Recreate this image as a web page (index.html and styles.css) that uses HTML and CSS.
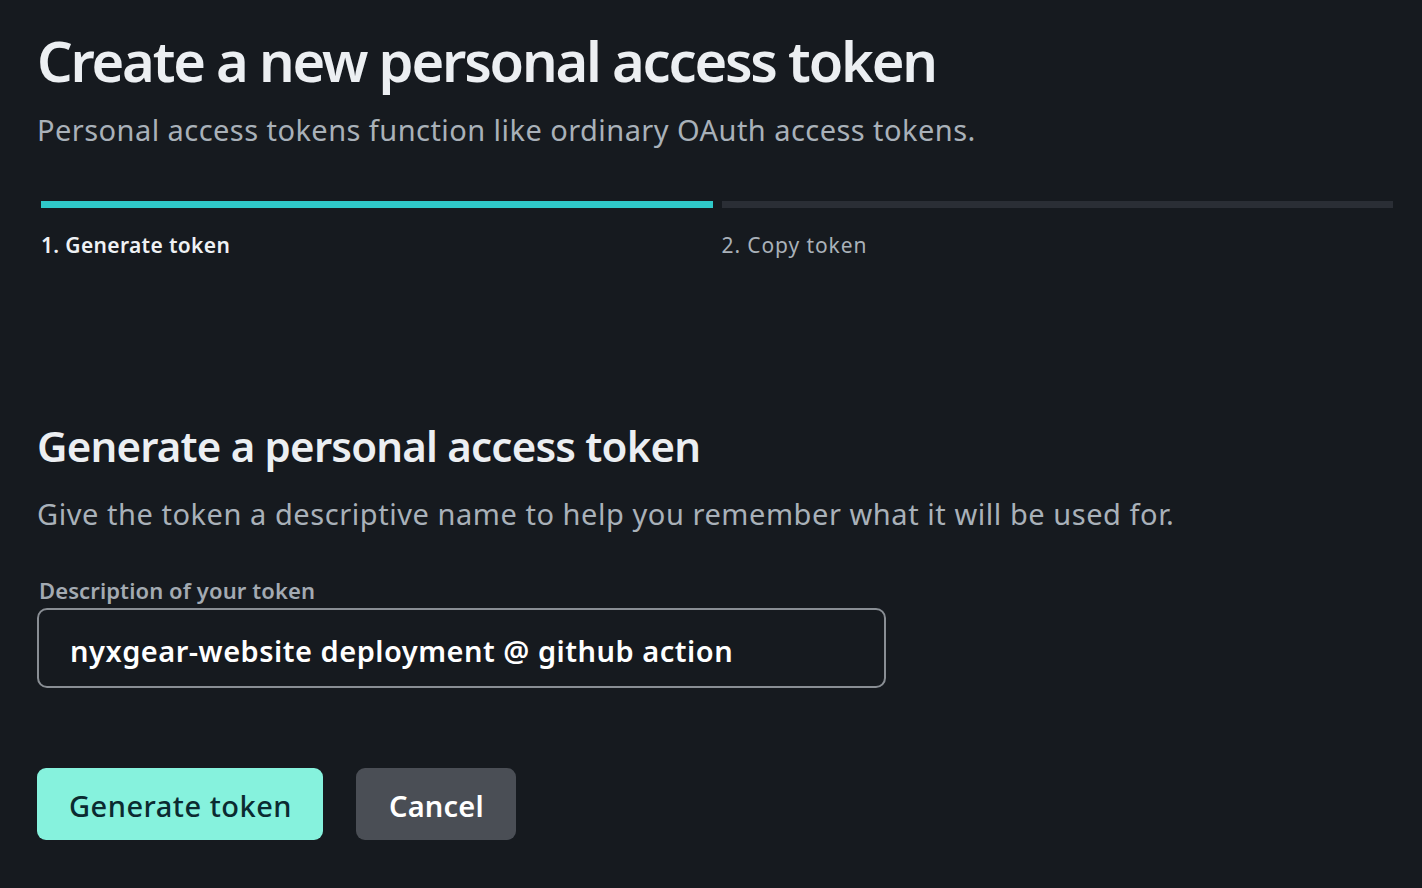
FILE: index.html
```html
<!DOCTYPE html>
<html lang="en">
<head>
<meta charset="utf-8">
<title>Create a new personal access token</title>
<link rel="stylesheet" href="styles.css">
</head>
<body>
<main class="page">
  <header class="head">
    <h1 class="title">Create a new personal access token</h1>
    <p class="subtitle">Personal access tokens function like ordinary OAuth access tokens.</p>
  </header>
  <ol class="steps">
    <li class="step active"><span class="bar"></span><span class="label">1. Generate token</span></li>
    <li class="step"><span class="bar"></span><span class="label">2. Copy token</span></li>
  </ol>
  <section class="form">
    <h2 class="form-title">Generate a personal access token</h2>
    <p class="form-desc">Give the token a descriptive name to help you remember what it will be used for.</p>
    <label class="field-label" for="desc">Description of your token</label>
    <input class="field" id="desc" type="text" value="nyxgear-website deployment @ github action">
    <div class="actions">
      <button class="btn primary" type="button">Generate token</button>
      <button class="btn secondary" type="button">Cancel</button>
    </div>
  </section>
</main>
</body>
</html>
```

FILE: styles.css
```css
* { box-sizing: border-box; }
html, body { margin: 0; padding: 0; }
body {
  background: #161a1f;
  color: #e8ecf0;
  font-family: "Noto Sans", "Open Sans", "Liberation Sans", sans-serif;
  width: 1422px;
  height: 888px;
  overflow: hidden;
}
.page {
  padding: 22px 29px 0 37px;
}
.title {
  margin: 0;
  font-size: 56px;
  font-weight: 600;
  line-height: 76px;
  color: #eceff2;
  letter-spacing: -2.2px;
}
.subtitle {
  margin: 12px 0 0 0;
  font-size: 29px;
  line-height: 40px;
  color: #a9b1b9;
  letter-spacing: 0.45px;
}
.steps {
  list-style: none;
  margin: 51px 0 0 0;
  padding: 0 0 0 4px;
  display: flex;
  gap: 9px;
}
.step {
  flex: 1;
  display: flex;
  flex-direction: column;
}
.bar {
  display: block;
  height: 7px;
  background: #2a2e35;
}
.step.active .bar { background: #2fc9c9; }
.label {
  margin-top: 23px;
  font-size: 21px;
  line-height: 28px;
  color: #a9b1b9;
  letter-spacing: 0.9px;
}
.step.active .label { color: #eef1f4; font-weight: 600; letter-spacing: 0.35px; }
.form { margin-top: 159px; }
.form-title {
  margin: 0;
  font-size: 42px;
  font-weight: 600;
  line-height: 56px;
  color: #eceff2;
  letter-spacing: -0.8px;
}
.form-desc {
  margin: 20px 0 0 0;
  font-size: 29px;
  line-height: 40px;
  color: #a9b1b9;
  letter-spacing: 0.55px;
}
.field-label {
  display: block;
  margin: 41px 0 0 2px;
  font-size: 22px;
  font-weight: 600;
  line-height: 30px;
  color: #a3aab2;
  letter-spacing: 0.1px;
}
.field {
  display: block;
  margin-top: 3px;
  width: 849px;
  height: 80px;
  padding: 5px 30px 0 31px;
  background: #161a1f;
  border: 2px solid #898e94;
  border-radius: 10px;
  color: #ffffff;
  font-family: inherit;
  font-size: 29px;
  font-weight: 600;
  letter-spacing: 0.5px;
  outline: none;
}
.actions {
  display: flex;
  gap: 33px;
  margin-top: 80px;
}
.btn {
  height: 72px;
  border: 0;
  border-radius: 9px;
  font-family: inherit;
  font-size: 29px;
  letter-spacing: 0.5px;
  padding: 2px 31px 0 32px;
}
.btn.primary {
  background: #86f2dd;
  color: #0b2a30;
  font-weight: 500;
}
.btn.secondary {
  background: #4a4e55;
  color: #ffffff;
  font-weight: 600;
  letter-spacing: 0.2px;
  padding: 2px 32px 0 33px;
}
```
